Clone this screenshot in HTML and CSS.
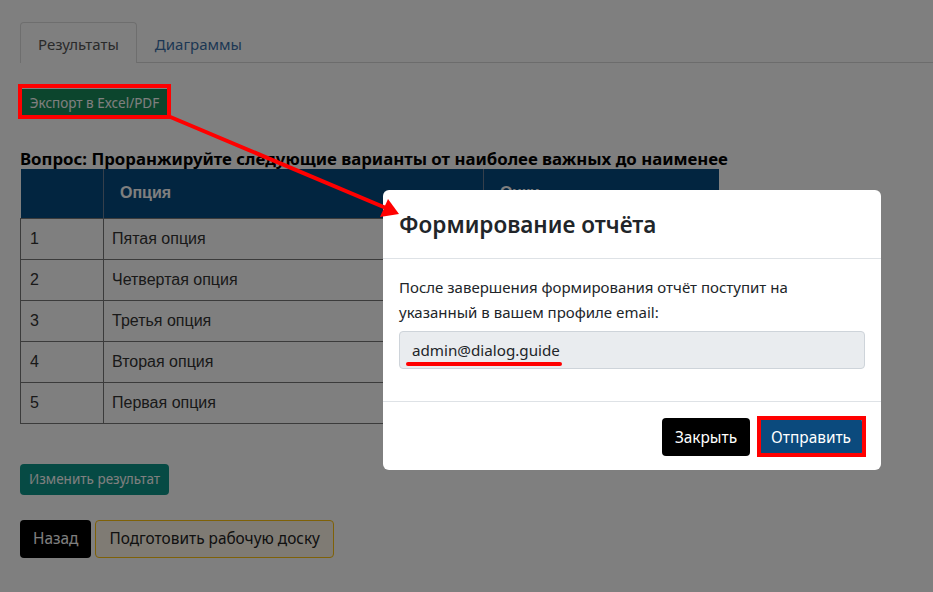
FILE: index.html
```html
<!DOCTYPE html>
<html lang="ru">
<head>
    <meta charset="UTF-8">
    <meta name="viewport" content="width=device-width, initial-scale=1.0">
    <title>Результаты опроса</title>
    <link rel="stylesheet" href="styles.css">
</head>
<body>
    <div class="page">
        <ul class="tabs">
            <li class="tab active">Результаты</li>
            <li class="tab">Диаграммы</li>
        </ul>

        <button type="button" class="btn btn-export">Экспорт в Excel/PDF</button>

        <h3 class="question">Вопрос: Проранжируйте следующие варианты от наиболее важных до наименее</h3>

        <table class="results">
            <thead>
                <tr>
                    <th class="col-num"></th>
                    <th class="col-option">Опция</th>
                    <th class="col-score">Очки</th>
                </tr>
            </thead>
            <tbody>
                <tr><td>1</td><td>Пятая опция</td><td></td></tr>
                <tr><td>2</td><td>Четвертая опция</td><td></td></tr>
                <tr><td>3</td><td>Третья опция</td><td></td></tr>
                <tr><td>4</td><td>Вторая опция</td><td></td></tr>
                <tr><td>5</td><td>Первая опция</td><td></td></tr>
            </tbody>
        </table>

        <button type="button" class="btn btn-change">Изменить результат</button>

        <div class="actions">
            <button type="button" class="btn btn-dark">Назад</button>
            <button type="button" class="btn btn-board">Подготовить рабочую доску</button>
        </div>
    </div>

    <div class="backdrop">
        <div class="modal">
            <div class="modal-header">
                <h2 class="modal-title">Формирование отчёта</h2>
            </div>
            <div class="modal-body">
                <p>После завершения формирования отчёт поступит на указанный в вашем профиле email:</p>
                <div class="email-field"><span class="email-value">admin@dialog.guide</span></div>
            </div>
            <div class="modal-footer">
                <button type="button" class="btn btn-dark btn-modal">Закрыть</button>
                <button type="button" class="btn btn-send btn-modal">Отправить</button>
            </div>
        </div>
    </div>

    <!-- red annotations drawn over the screenshot -->
    <svg class="marks" width="933" height="592" viewBox="0 0 933 592">
        <rect x="20" y="86" width="149" height="31" fill="none" stroke="#ff0000" stroke-width="4"/>
        <rect x="759" y="418" width="105" height="37" fill="none" stroke="#ff0000" stroke-width="4"/>
        <line x1="168" y1="116" x2="386" y2="208" stroke="#ff0000" stroke-width="4"/>
        <polygon points="399,214 380,217 388,199" fill="#ff0000"/>
    </svg>
</body>
</html>
```

FILE: styles.css
```css
body {
    font-family: "Noto Sans", Arial, sans-serif;
    background-color: #fff;
    color: #333;
    margin: 0;
    padding: 0;
}

.page {
    padding: 22px 0 20px 20px;
}

.tabs {
    display: flex;
    list-style: none;
    margin: 0;
    padding: 0;
    border-bottom: 1px solid #d9d9d9;
}

.tab {
    padding: 0 17px;
    height: 39px;
    line-height: 42px;
    font-size: 15px;
    color: #3a6fa8;
    border: 1px solid transparent;
    border-bottom: none;
    border-radius: 4px 4px 0 0;
    margin-bottom: -1px;
}

.tab.active {
    color: #555;
    background-color: #fff;
    border-color: #ddd;
    height: 40px;
}

.btn {
    font-family: "Noto Sans", Arial, sans-serif;
    border: 1px solid transparent;
    border-radius: 4px;
    cursor: pointer;
    display: inline-block;
}

.btn-export {
    margin: 26px 0 0 2px;
    background-color: #198a5a;
    color: #fff;
    font-size: 13.5px;
    width: 145px;
    height: 27px;
    padding: 0;
    border-radius: 0;
}

.question {
    margin: 32px 0 0;
    font-size: 16.8px;
    line-height: 21px;
    color: #000;
    font-weight: bold;
    white-space: nowrap;
}

.results {
    border-collapse: collapse;
    table-layout: fixed;
    width: 699px;
    font-family: "Liberation Sans", Arial, sans-serif;
    font-size: 16px;
    color: #333;
}

.results th {
    box-sizing: border-box;
    background-color: #054a80;
    color: #fff;
    text-align: left;
    height: 49px;
    padding: 0 16px;
    border-left: 1px solid #6a7f96;
    font-weight: bold;
}

.results th:first-child {
    border-left: none;
}

.results td {
    border: 1px solid #777;
    height: 40px;
    padding: 0 8px;
}

.results td:first-child {
    padding-left: 9px;
}

.col-num {
    width: 83px;
}

.col-option {
    width: 380px;
}

.btn-change {
    margin-top: 40px;
    background-color: #0d9488;
    color: #fff;
    font-size: 13.5px;
    height: 31px;
    padding: 0 8px;
}

.actions {
    display: flex;
    gap: 4px;
    margin-top: 25px;
}

.btn-dark {
    background-color: #000;
    color: #fff;
    font-size: 15.4px;
    height: 38px;
    padding: 0 12px;
}

.btn-board {
    background-color: #fef6e8;
    border-color: #ffc20e;
    color: #222;
    font-size: 15.4px;
    height: 38px;
    padding: 0 13px;
}

.backdrop {
    position: fixed;
    inset: 0;
    background-color: rgba(0, 0, 0, 0.5);
    display: flex;
    align-items: flex-start;
    padding: 190px 0 0 383px;
}

.modal {
    width: 498px;
    background-color: #fff;
    border-radius: 6px;
    color: #212529;
}

.modal-header {
    padding: 0 16px;
    height: 68px;
    display: flex;
    align-items: center;
    border-bottom: 1px solid #dee2e6;
}

.modal-title {
    margin: 0;
    font-size: 22.5px;
    font-weight: 600;
}

.modal-body {
    padding: 16px 16px 32px;
}

.modal-body p {
    margin: 0 0 6px;
    font-size: 15px;
    line-height: 25px;
}

.email-field {
    height: 36px;
    border: 1px solid #ced4da;
    border-radius: 4px;
    background-color: #e9ecef;
    display: flex;
    align-items: center;
    padding: 0 12px;
    font-size: 15.2px;
}

.email-value {
    position: relative;
}

.email-value::after {
    content: "";
    position: absolute;
    left: -6px;
    right: -2px;
    bottom: -6px;
    height: 4px;
    border-radius: 2px;
    background-color: #ff0000;
}

.modal-footer {
    border-top: 1px solid #dee2e6;
    padding: 16px 19px 14px;
    display: flex;
    justify-content: flex-end;
    gap: 10px;
}

.btn-modal {
    height: 38px;
    padding: 0 12px;
    font-size: 15.4px;
}

.btn-send {
    background-color: #0b4a7d;
    color: #fff;
    padding: 0 10px;
}

.marks {
    position: fixed;
    top: 0;
    left: 0;
    pointer-events: none;
}
```
